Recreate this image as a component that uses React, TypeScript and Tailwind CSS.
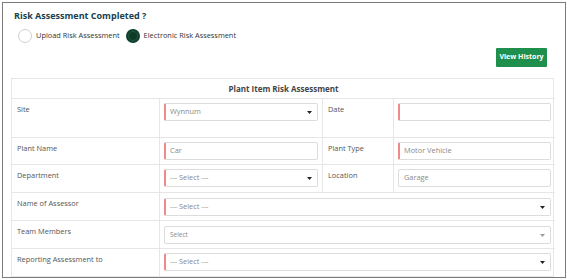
import React from 'react';

const font = { fontFamily: '"Open Sans", "Liberation Sans", sans-serif' };

function Caret({ light }: { light?: boolean }) {
  return (
    <svg width="5" height="3" viewBox="0 0 5 3" className="shrink-0">
      <path d="M0 0 L5 0 L2.5 3 Z" fill={light ? '#9a9a9a' : '#222'} />
    </svg>
  );
}

function Field({
  value,
  required,
  select,
  small,
}: {
  value?: string;
  required?: boolean;
  select?: boolean;
  small?: boolean;
}) {
  return (
    <div
      className={`flex h-[18px] items-center justify-between rounded-[2px] border border-[#dcdcdc] bg-white pr-[5px] ${
        required ? 'border-l-2 border-l-[#f08a8a] pl-[4px]' : 'pl-[5px]'
      }`}
    >
      <span className={`${small ? 'text-[6.5px]' : 'text-[7.4px]'} text-[#8a8a8a]`}>{value}</span>
      {select && <Caret light={small} />}
    </div>
  );
}

function Label({ children }: { children: React.ReactNode }) {
  return <div className="pl-[5px] pt-[3px] text-[7.4px] leading-[14px] text-[#555]">{children}</div>;
}

export default function App() {
  return (
    <div style={font} className="ml-[2px] mt-[2px] h-[276px] w-[564px] border border-[#7b7b7b] bg-white">
      {/* heading */}
      <div className="pl-[11px] pt-[5px] text-[9px] font-bold leading-[16px] text-[#17414d]">
        Risk Assessment Completed ?
      </div>

      {/* radios */}
      <div className="mt-[5px] flex h-[14px] items-center pl-[15px] text-[7.4px] text-[#333]">
        <span className="h-[14px] w-[14px] rounded-full border border-[#cfcfcf] bg-white" />
        <span className="ml-[4px]">Upload Risk Assessment</span>
        <span className="ml-[6px] flex h-[14px] w-[14px] items-center justify-center rounded-full border-2 border-[#103f2c] bg-[#1c5a3e]">
          <span className="h-[8px] w-[8px] rounded-full bg-[#0f3a28]" />
        </span>
        <span className="ml-[4px]">Electronic Risk Assessment</span>
      </div>

      {/* actions */}
      <div className="mt-[5px] flex justify-end pr-[18px]">
        <button className="h-[19px] w-[51px] whitespace-nowrap rounded-[1px] bg-[#1f8f4e] text-[7px] font-bold text-white">
          View History
        </button>
      </div>

      {/* form table */}
      <div className="ml-[8px] mt-[11px] grid w-[543px] grid-cols-[148px_163px_71px_161px] border border-[#e6e6e6] text-[#555]">
        <div className="col-span-4 flex h-[20px] items-center justify-center border-b border-[#e6e6e6] text-[8px] font-bold text-[#444]">
          Plant Item Risk Assessment
        </div>

        <div className="h-[39px] border-b border-r border-[#e6e6e6]">
          <Label>Site</Label>
        </div>
        <div className="h-[39px] border-b border-r border-[#e6e6e6] px-[4px] pt-[4px]">
          <Field value="Wynnum" required select />
        </div>
        <div className="h-[39px] border-b border-r border-[#e6e6e6]">
          <Label>Date</Label>
        </div>
        <div className="h-[39px] border-b border-[#e6e6e6] px-[4px] pt-[4px]">
          <Field required />
        </div>

        <div className="h-[27px] border-b border-r border-[#e6e6e6]">
          <Label>Plant Name</Label>
        </div>
        <div className="h-[27px] border-b border-r border-[#e6e6e6] px-[4px] pt-[4px]">
          <Field value="Car" required />
        </div>
        <div className="h-[27px] border-b border-r border-[#e6e6e6]">
          <Label>Plant Type</Label>
        </div>
        <div className="h-[27px] border-b border-[#e6e6e6] px-[4px] pt-[4px]">
          <Field value="Motor Vehicle" required />
        </div>

        <div className="h-[28px] border-b border-r border-[#e6e6e6]">
          <Label>Department</Label>
        </div>
        <div className="h-[28px] border-b border-r border-[#e6e6e6] px-[4px] pt-[4px]">
          <Field value="--- Select ---" required select />
        </div>
        <div className="h-[28px] border-b border-r border-[#e6e6e6]">
          <Label>Location</Label>
        </div>
        <div className="h-[28px] border-b border-[#e6e6e6] px-[4px] pt-[4px]">
          <Field value="Garage" />
        </div>

        <div className="h-[28px] border-b border-r border-[#e6e6e6]">
          <Label>Name of Assessor</Label>
        </div>
        <div className="col-span-3 h-[28px] border-b border-[#e6e6e6] px-[4px] pt-[5px]">
          <Field value="--- Select ---" required select />
        </div>

        <div className="h-[28px] border-b border-r border-[#e6e6e6]">
          <Label>Team Members</Label>
        </div>
        <div className="col-span-3 h-[28px] border-b border-[#e6e6e6] px-[4px] pt-[5px]">
          <Field value="Select" select small />
        </div>

        <div className="h-[27px] border-r border-[#e6e6e6]">
          <Label>Reporting Assessment to</Label>
        </div>
        <div className="col-span-3 h-[27px] px-[4px] pt-[4px]">
          <Field value="--- Select ---" required select />
        </div>
      </div>
    </div>
  );
}
